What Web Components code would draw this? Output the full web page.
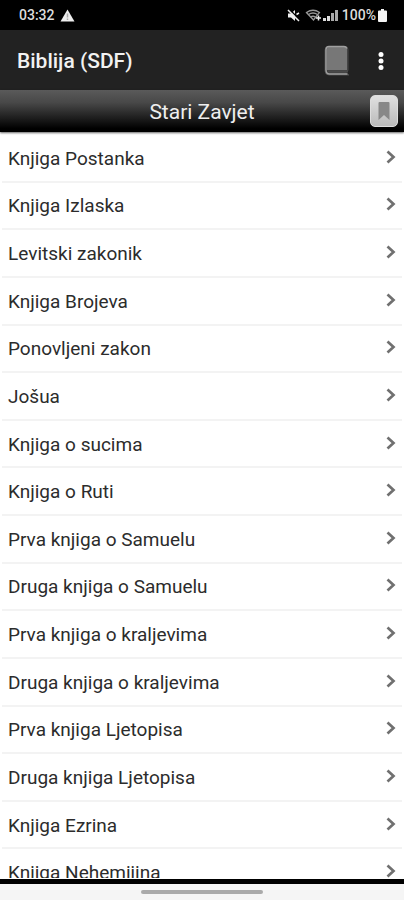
<!DOCTYPE html>
<html lang="hr">
<head>
<meta charset="utf-8">
<meta name="viewport" content="width=device-width, initial-scale=1">
<title>Biblija (SDF)</title>
<style>
html, body { height: 100%; margin: 0; }
body { font-family: Roboto, "Liberation Sans", sans-serif; background: #fff; }
</style>
</head>
<body>
<bible-app></bible-app>
<script>
class BaseElement extends HTMLElement {
  constructor() {
    super();
    this.attachShadow({ mode: 'open' }).innerHTML = this.render();
  }
}

customElements.define('status-bar', class extends BaseElement {
  render() {
    return `<style>
      :host { display: flex; align-items: center; justify-content: space-between; height: 30px; padding: 0 17px 0 19px; background: #000; color: #dcdcdc; font-size: 14px; line-height: 16px; font-weight: 500; box-sizing: border-box; }
      .group { display: flex; align-items: center; gap: 5px; }
      .right { gap: 2px; }
      svg { display: block; }
    </style>
    <div class="group"><span>03:32</span>
      <svg width="15" height="13" viewBox="0 0 15 13"><path d="M7.500 .5 14.500 12.500H.5Z" fill="#eee"/><path d="M7.500 4.500v4M7.500 9.500v1.500" stroke="#aaa" stroke-width="1.500"/></svg>
    </div>
    <div class="group right">
      <svg width="13" height="13" viewBox="0 0 13 13"><path d="M1 4.500h3L8 1v11L4 8.500H1Z" fill="#eee"/><path d="M2 0l11 11" stroke="#000" stroke-width="1.500"/><path d="M1 1l11 11M9.500 5.500l2.500-1.500" stroke="#eee" stroke-width="1.500"/></svg>
      <svg width="38" height="14" viewBox="-2 0 38 14"><g fill="none" stroke="#999" stroke-width="1.300"><path d="M2.500 4.500Q9 0 15.500 4.500L9.500 12Z"/><path d="M4.500 6.500Q9 3.500 13.500 6.500M6.500 9Q9 7.500 11.500 9"/></g><path d="M12 10h5M14.500 7.500v5" stroke="#eee" stroke-width="1.500"/><path d="M19 10h3v3h-3zM23 8h3v5h-3z" fill="#ddd"/><path d="M27 5h3v8h-3zM31 2h3v11h-3z" fill="#aaa"/></svg>
      <span>100%</span>
      <svg width="9" height="13" viewBox="0 0 9 13"><path d="M3 0h3v1.500h2q1 0 1 1V12q0 1-1 1H1q-1 0-1-1V2.500q0-1 1-1h2Z" fill="#f5f5f5"/></svg>
    </div>`;
  }
});

customElements.define('title-bar', class extends BaseElement {
  render() {
    return `<style>
      :host { display: flex; align-items: center; height: 60px; padding: 2px 12px 0 17px; box-sizing: border-box; background: #222; color: #f2f2f2; }
      h1 { flex: 1; margin: 0; font-size: 21px; line-height: 24px; font-weight: 500; }
      button { display: flex; align-items: center; justify-content: center; height: 40px; padding: 0; border: 0; background: none; }
      .book { width: 32px; margin-right: 17px; }
      .more { width: 22px; }
    </style>
    <h1><slot></slot></h1>
    <button class="book" aria-label="Knjige"><svg width="28" height="32" viewBox="0 0 28 32"><path d="M5.500 1.500H22q3 0 3 3V25q0 2-2 2v2q2 0 3 1H6q-4 0-4-4V5q0-3.500 3.500-3.500Z" fill="#414141" stroke="#484848" stroke-width="1"/><path d="M6 2h16q2 0 2 2.500V25H4V4q0-2 2-2Z" fill="#777"/><path d="M24 3.500Q23 1.500 21 1.500H6Q3 1.500 3 4.500V25q0 4 3.500 4H24.500" fill="none" stroke="#a0a0a0" stroke-width="1.500"/><path d="M5 26.500h20" stroke="#484848" stroke-width="2"/></svg></button>
    <button class="more" aria-label="Više"><svg width="6" height="20" viewBox="0 0 6 20" fill="#fff"><circle cx="3" cy="3.500" r="2.500"/><circle cx="3" cy="10" r="2.500"/><circle cx="3" cy="16.500" r="2.500"/></svg></button>`;
  }
});

customElements.define('section-bar', class extends BaseElement {
  render() {
    return `<style>
      :host { display: grid; grid-template-columns: 1fr auto 1fr; align-items: center; height: 42px; padding: 0 6px; box-sizing: border-box; background: linear-gradient(#5a5a5a, #484848 30%, #1c1c1c 68%, #000 92%); color: #eee; box-shadow: 0 1px 2px #0009; position: relative; }
      h2 { grid-column: 2; margin: 2px 0 0; font-size: 21px; line-height: 24px; font-weight: 400; }
      button { justify-self: end; display: flex; align-items: center; justify-content: center; width: 28px; height: 32px; padding: 0; border: 1px solid #ddd; border-radius: 5px; background: linear-gradient(#e0e0e0, #bbb); }
    </style>
    <h2><slot></slot></h2>
    <button aria-label="Oznake"><svg width="12" height="20" viewBox="0 0 12 20"><path d="M1.500 1h9q1 0 1 1v17L6 14 .5 19V2q0-1 1-1Z" fill="#888"/></svg></button>`;
  }
});

customElements.define('book-row', class extends BaseElement {
  render() {
    return `<style>
      :host { display: block; padding: 0 2px; }
      a { display: flex; align-items: center; justify-content: space-between; height: 100%; box-sizing: border-box; padding: 2px 6px 0; border-bottom: 2px solid #f3f3f3; color: #2c2c2c; text-decoration: none; font-size: 19px; line-height: 24px; font-weight: 400; }
      svg { display: block; flex: none; margin-bottom: 4px; }
    </style>
    <a href="#"><slot></slot><svg width="10" height="14" viewBox="0 0 10 14"><path d="M1.500 1.500 7.500 7l-6 5.500" fill="none" stroke="#707070" stroke-width="2.700"/></svg></a>`;
  }
});

const BOOKS = ['Knjiga Postanka', 'Knjiga Izlaska', 'Levitski zakonik', 'Knjiga Brojeva', 'Ponovljeni zakon', 'Jošua', 'Knjiga o sucima', 'Knjiga o Ruti', 'Prva knjiga o Samuelu', 'Druga knjiga o Samuelu', 'Prva knjiga o kraljevima', 'Druga knjiga o kraljevima', 'Prva knjiga Ljetopisa', 'Druga knjiga Ljetopisa', 'Knjiga Ezrina', 'Knjiga Nehemijina'];

customElements.define('book-list', class extends BaseElement {
  render() {
    return `<style>
      :host { display: block; overflow: hidden; }
      nav { display: grid; grid-auto-rows: 1fr; min-height: 762px; padding-top: 3px; }
    </style>
    <nav>${BOOKS.map(b => `<book-row>${b}</book-row>`).join('')}</nav>`;
  }
});

customElements.define('gesture-bar', class extends BaseElement {
  render() {
    return `<style>
      :host { display: flex; justify-content: center; align-items: center; height: 21px; box-sizing: border-box; border-top: 5px solid #000; background: #f5f5f5; }
      span { width: 30%; height: 4px; border-radius: 2px; background: #aaa; }
    </style><span></span>`;
  }
});

customElements.define('bible-app', class extends BaseElement {
  render() {
    return `<style>
      :host { display: flex; flex-direction: column; height: 100vh; }
      book-list { flex: 1; min-height: 0; margin-bottom: 1px; }
      status-bar, title-bar, section-bar, gesture-bar { flex: none; }
    </style>
    <status-bar></status-bar>
    <title-bar>Biblija (SDF)</title-bar>
    <section-bar>Stari Zavjet</section-bar>
    <book-list></book-list>
    <gesture-bar></gesture-bar>`;
  }
});
</script>
</body>
</html>
